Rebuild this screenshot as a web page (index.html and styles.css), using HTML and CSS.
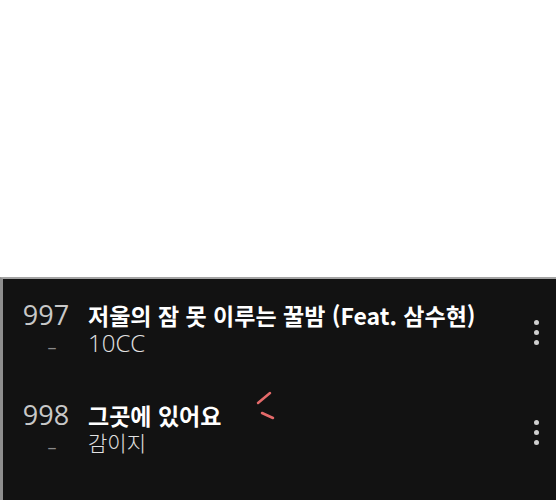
FILE: index.html
```html
<!DOCTYPE html>
<html lang="ko">
<head>
    <meta charset="UTF-8">
    <meta name="viewport" content="width=device-width, initial-scale=1.0">
    <title>차트</title>
    <link rel="stylesheet" href="styles.css">
</head>
<body>
    <div class="blank"></div>

    <div class="chart">
        <div class="row">
            <div class="rank">
                <div class="num">997</div>
                <div class="change">–</div>
            </div>
            <div class="info">
                <div class="title">저울의 잠 못 이루는 꿀밤 (Feat. 삼수현)</div>
                <div class="artist latin">10CC</div>
            </div>
            <div class="more"><i></i><i></i><i></i></div>
        </div>

        <div class="row">
            <div class="rank">
                <div class="num">998</div>
                <div class="change">–</div>
            </div>
            <div class="info">
                <div class="title">그곳에 있어요</div>
                <div class="artist">감이지</div>
            </div>
            <div class="more"><i></i><i></i><i></i></div>
        </div>

        <!-- 빨간 표시 -->
        <svg class="mark" width="30" height="40" viewBox="0 0 30 40">
            <line x1="8" y1="16" x2="20" y2="6" />
            <line x1="12" y1="26" x2="23" y2="31" />
        </svg>
    </div>
</body>
</html>
```

FILE: styles.css
```css
*{
    margin: 0;
    padding: 0;
    box-sizing: border-box;
}
body{
    background-color: #ffffff;
    font-family: "Noto Sans CJK KR", sans-serif;
}
.blank{
    height: 277px;
}
.chart{
    position: relative;
    height: 223px;
    padding-top: 3px;
    background-color: #121212;
    border-top: 2px solid #a3a3a3;
    border-left: 3px solid #8e8e8e;
}
.row{
    display: flex;
    align-items: center;
    height: 100px;
}
.rank{
    width: 54px;
    margin-left: 16px;
    margin-bottom: 3px;
    text-align: center;
    color: #c8c8c8;
}
.rank .num{
    font-family: "Open Sans", sans-serif;
    font-size: 27px;
    line-height: 28px;
}
.rank .change{
    padding-top: 5px;
    padding-left: 12px;
    font-family: "Open Sans", sans-serif;
    font-size: 18px;
    line-height: 27px;
    color: #8a8a8a;
}
.info{
    margin-left: 15px;
    margin-bottom: 8px;
    color: #ffffff;
}
.title{
    font-size: 23px;
    font-weight: 700;
    line-height: 28px;
}
.artist{
    font-size: 21px;
    font-weight: 300;
    line-height: 27px;
    color: #e2e2e2;
}
.artist.latin{
    font-family: "Open Sans", sans-serif;
    font-size: 24px;
}
.more{
    display: flex;
    flex-direction: column;
    gap: 5px;
    margin-left: auto;
    margin-right: 17px;
}
.more i{
    width: 5px;
    height: 5px;
    border-radius: 50%;
    background-color: #cfcfcf;
}
.mark{
    position: absolute;
    left: 247px;
    top: 108px;
}
.mark line{
    stroke: #e46a6a;
    stroke-width: 2.5;
    stroke-linecap: round;
}
```
